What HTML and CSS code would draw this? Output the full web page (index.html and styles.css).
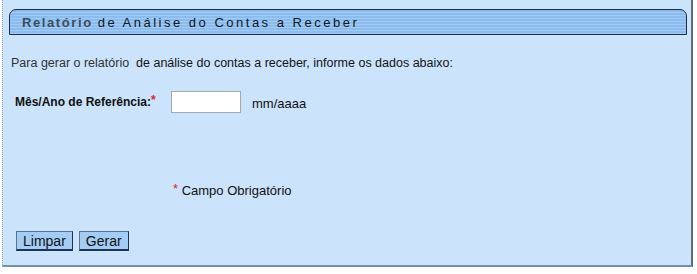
FILE: index.html
```html
<!DOCTYPE html>
<html lang="pt">
<head>
<meta charset="utf-8">
<title>Relatório de Análise do Contas a Receber</title>
<link rel="stylesheet" href="styles.css">
</head>
<body>
<div class="page">
  <div class="panel">
    <div class="titlebar">
      <span class="t1">Relatório</span><span class="t2">de Análise do Contas a Receber</span>
    </div>
    <p class="intro"><span class="muted">Para gerar o relatório</span>&nbsp; de análise do contas a receber, informe os dados abaixo:</p>
    <div class="row">
      <label class="label">Mês/Ano de Referência:<span class="req">*</span></label>
      <input class="field" type="text">
      <span class="hint">mm/aaaa</span>
    </div>
    <p class="note"><span class="req">*</span> Campo Obrigatório</p>
    <div class="buttons">
      <button class="btn" type="button">Limpar</button>
      <button class="btn" type="button">Gerar</button>
    </div>
  </div>
</div>
</body>
</html>
```

FILE: styles.css
```css
html, body {
  margin: 0;
  padding: 0;
  background: #ffffff;
}
body {
  font-family: "Liberation Sans", Arial, sans-serif;
  font-size: 13px;
  color: #111;
}
.page {
  display: flex;
  padding-left: 2px;
}
.panel {
  width: 691px;
  height: 267px;
  box-sizing: border-box;
  background: #cbe3fb;
  border-left: 1px dotted #9aa6b4;
  border-right: 2px solid #5e6c7c;
  border-bottom: 2px solid #7390ae;
  padding: 9px 4px 0 6px;
  display: flex;
  flex-direction: column;
}
.titlebar {
  height: 24px;
  border: 1px solid #1e2d47;
  border-radius: 7px 7px 0 0;
  background: repeating-linear-gradient(to bottom, #8bbcee 0px, #8bbcee 2px, #a2caf4 2px, #a2caf4 3px);
  display: flex;
  align-items: center;
  padding-left: 12px;
  font-size: 13px;
  white-space: nowrap;
}
.t1 {
  color: #3d4c5c;
  letter-spacing: 1.6px;
  font-weight: bold;
}
.t2 {
  color: #101820;
  letter-spacing: 2.5px;
  margin-left: 5px;
}
.intro {
  margin: 21px 0 0 2px;
  font-size: 12.5px;
  color: #141414;
  white-space: nowrap;
}
.muted {
  color: #333;
}
.row {
  display: flex;
  align-items: center;
  margin-top: 21px;
  margin-left: 6px;
}
.label {
  font-weight: bold;
  font-size: 12px;
  width: 156px;
  margin-top: -3px;
}
.req {
  color: #e02020;
  vertical-align: 2px;
  font-weight: normal;
}
.label .req {
  font-weight: bold;
}
.field {
  width: 70px;
  height: 22px;
  box-sizing: border-box;
  border: 1px solid #a8a8a8;
  background: #fff;
  margin: 0;
  padding: 0;
}
.hint {
  margin-left: 11px;
  font-size: 13px;
  margin-top: 3px;
}
.note {
  margin: 68px 0 0 164px;
  font-size: 13px;
}
.buttons {
  display: flex;
  gap: 6px;
  margin-top: 33px;
  margin-left: 7px;
}
.btn {
  font-family: "Liberation Sans", Arial, sans-serif;
  font-size: 14px;
  color: #111;
  background: #a3cdf5;
  border: 1px solid #5b7190;
  border-right-color: #1f3358;
  border-bottom: 2px solid #1f3358;
  height: 20px;
  padding: 0 6px;
  margin: 0;
  line-height: 16px;
}
```
